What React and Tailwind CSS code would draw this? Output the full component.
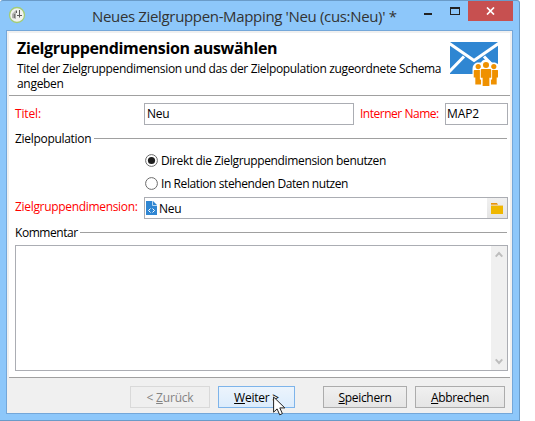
import React from "react";

function AppIcon() {
  return (
    <svg className="mt-[5px] ml-[8px] shrink-0" width="18" height="18" viewBox="0 0 18 18">
      <circle cx="9" cy="9" r="7.5" fill="#f1f2f0" stroke="#a3cc76" strokeWidth="1.3" />
      <path d="M4 8l4-4v9l-4-1z" fill="#b5b5b3" />
      <path d="M6.5 8v4" stroke="#777" strokeWidth="1.4" />
      <path d="M8.5 4.5V7M11.5 4v7.5M9 9.5h5" stroke="#5b5b5b" strokeWidth="1" fill="none" />
    </svg>
  );
}

function Person({ x, y, s }) {
  return (
    <g transform={`translate(${x} ${y}) scale(${s})`}>
      <circle cx="0" cy="2.8" r="2.8" />
      <path d="M-3.8 6.5h7.6q1 0 1 1v7h-1.7v7.5h-6.2v-7.5h-1.7v-7q0-1 1-1z" />
    </g>
  );
}

function MailIcon() {
  return (
    <svg className="mt-[9px] shrink-0" width="48" height="44" viewBox="0 0 48 44">
      <path d="M0 0h48v32H0z" fill="#2f86d2" />
      <path d="M-1 1.2L24 18.5L49 1.2M-1 30l15-15.5M49 30L34 14.5" stroke="#fff" strokeWidth="3" fill="none" />
      <path d="M22.5 33V27q0-5 4.5-6.5h4q1.5-3 5-3t5 3h4l4 2v11z" fill="#fff" />
      <g fill="#ef9100">
        <Person x={28.2} y={22} s={0.93} />
        <Person x={43.8} y={22} s={0.93} />
      </g>
      <path d="M29.9 26h12.2v11.4h-1.9V44h-8.4v-6.6h-1.9z" fill="#fff" />
      <g fill="#ef9100">
        <Person x={36} y={20} s={1.09} />
      </g>
    </svg>
  );
}

function Radio({ checked, children }) {
  return (
    <label className="flex h-[23px] items-center">
      <svg className="shrink-0" width="13" height="13" viewBox="0 0 13 13">
        <circle cx="6.5" cy="6.5" r="5.9" fill="#fff" stroke="#6b6b6b" strokeWidth="1" />
        {checked && <circle cx="6.5" cy="6.5" r="3.6" fill="#1e1e1e" />}
      </svg>
      {children}
    </label>
  );
}

function GroupTitle({ children }) {
  return (
    <div className="flex h-[17px] items-center whitespace-nowrap">
      {children}
      <div className="h-px flex-1 bg-[#a0a0a0]" />
    </div>
  );
}

function Chevron({ down }) {
  return (
    <svg className={down ? "rotate-180" : ""} width="8" height="7" viewBox="0 0 8 7">
      <path d="M.7 5.6L4 2l3.3 3.6" fill="none" stroke="#bdbdbd" strokeWidth="2" />
    </svg>
  );
}

const button = "flex h-[22px] items-center justify-center border whitespace-pre";

export default function App() {
  return (
    <div className="h-[421px] w-[535px] overflow-hidden bg-white font-['Open_Sans','Noto_Sans',sans-serif] text-[12px] leading-[15px] text-black">
      <div className="relative flex h-[421px] w-[520px] flex-col rounded-t-[3px] border-t border-r border-b border-[#6a9bc8] bg-[#8dc7fa]">
        <div className="flex h-[29px] shrink-0 items-start text-[#333]">
          <AppIcon />
          <div className="mt-[5px] ml-[66px] w-[324px] text-[15px] leading-[20px] tracking-[-0.34px] whitespace-nowrap">
            Neues Zielgruppen-Mapping &#39;Neu (cus:Neu)&#39; *
          </div>
          <div className="mt-[12px] ml-[8px] h-[2px] w-[8px] bg-[#222]" />
          <div className="mt-[6px] ml-[18px] h-[8px] w-[10px] border border-t-2 border-[#222]" />
          <div className="ml-[8px] flex h-[20px] w-[45px] items-center justify-center bg-[#c75050]">
            <svg width="9" height="8" viewBox="0 0 9 8">
              <path d="M1 .5l7 7M8 .5l-7 7" stroke="#fff" strokeWidth="1.7" />
            </svg>
          </div>
        </div>

        <div className="ml-[6px] flex h-[384px] w-[507px] flex-col border border-[#74a7d9] bg-[#f0f0f0] px-[2px] pt-[2px]">
          <div className="flex h-[63px] w-[501px] shrink-0 border-b border-[#a0a0a0] bg-white pl-[8px]">
            <div className="w-[433px] shrink-0 whitespace-nowrap">
              <div className="mt-[5px] text-[16px] leading-[20px] font-bold tracking-[-0.34px]">
                <span>Zielgruppendimension auswählen</span>
              </div>
              <div className="mt-[3px]">
                <div className="tracking-[-0.34px]">Titel der Zielgruppendimension und das der Zielpopulation zugeordnete Schema</div>
                <div className="tracking-[-0.3px]">angeben</div>
              </div>
            </div>
            <MailIcon />
          </div>

          <div className="flex h-[281px] w-[501px] shrink-0 flex-col bg-white pt-[7px] pr-[2px] pl-[6px]">
            <div className="flex h-[22px] shrink-0 whitespace-nowrap">
              <div className="mt-[3px] w-[129px] text-[#f00]">
                <span className="tracking-[-0.15px]">Titel:</span>
              </div>
              <div className="w-[210px] border border-[#abadb3] pt-[2px] pl-[2px]">
                <span className="tracking-[-0.3px]">Neu</span>
              </div>
              <div className="mt-[3px] ml-[6px] w-[85px] text-[#f00]">
                <span className="tracking-[-0.48px]">Interner Name:</span>
              </div>
              <div className="w-[63px] border border-[#abadb3] pt-[2px] pl-[1px]">
                <span className="tracking-[-0.1px]">MAP2</span>
              </div>
            </div>
            <div className="mt-[5px] h-[17px] pr-px">
              <GroupTitle>
                <span className="w-[79px] tracking-[-0.3px]">Zielpopulation</span>
              </GroupTitle>
            </div>
            <div className="mt-[2px] ml-[130px]">
              <Radio checked>
                <span className="ml-[3px] tracking-[-0.36px]">Direkt die Zielgruppendimension benutzen</span>
              </Radio>
              <Radio>
                <span className="ml-[3px] tracking-[-0.41px]">In Relation stehenden Daten nutzen</span>
              </Radio>
            </div>
            <div className="mt-[2px] flex h-[22px] shrink-0 whitespace-nowrap">
              <div className="mt-[2px] w-[129px] text-[#f00]">
                <span className="tracking-[-0.32px]">Zielgruppendimension:</span>
              </div>
              <div className="flex w-[364px] border border-[#abadb3]">
                <svg className="mt-[3px] ml-px shrink-0" width="11" height="14" viewBox="0 0 11 14">
                  <path d="M0 0h7l4 4v10H0z" fill="#2f86d2" />
                  <path d="M6.5 0v4.5H11" fill="none" stroke="#b9d9f2" strokeWidth="1" />
                  <path d="M4.5 7.5l-2 2 2 2M6.5 7.5l2 2-2 2" fill="none" stroke="#fff" strokeWidth="1" />
                </svg>
                <div className="mt-[3px] ml-[2px] flex-1">
                  <span className="tracking-[-0.3px]">Neu</span>
                </div>
                <div className="flex w-[20px] items-center justify-center bg-gradient-to-b from-[#f0f0f0] to-[#e5e5e5]">
                  <svg width="12" height="11" viewBox="0 0 12 11">
                    <path d="M0 0h6l1 2H0z" fill="#e8920c" />
                    <path d="M0 1.5h7v1.5H0zM7 2h5v1H7z" fill="#edcf91" />
                    <path d="M0 3h12v8H0z" fill="#efb700" />
                  </svg>
                </div>
              </div>
            </div>
            <div className="mt-[5px] h-[17px] pr-px">
              <GroupTitle>
                <span className="w-[65px] tracking-[-0.45px]">Kommentar</span>
              </GroupTitle>
            </div>
            <div className="mt-[4px] flex h-[126px] shrink-0 justify-end border border-[#abadb3]">
              <div className="flex w-[16px] flex-col items-center justify-between bg-[#f0f0f0] py-[5px]">
                <Chevron />
                <Chevron down />
              </div>
            </div>
          </div>

          <div className="flex h-[34px] w-[501px] border-t border-[#a0a0a0] pt-[8px] pl-[121px]">
            <div className={`${button} w-[80px] border-[#d9d9d9] bg-[#efefef] text-[#838383]`}>
              <span className="tracking-[-0.2px]">&lt; <u>Z</u>urück</span>
            </div>
            <div className={`${button} ml-[8px] w-[77px] border-[#7eb4ea] bg-gradient-to-b from-[#ecf4fc] to-[#dcecfc]`}>
              <span className="tracking-[-0.25px]"><u>W</u>eiter &gt;</span>
            </div>
            <div className={`${button} ml-[28px] w-[84px] border-[#acacac] bg-gradient-to-b from-[#f0f0f0] to-[#e5e5e5]`}>
              <span className="tracking-[-0.32px]"><u>S</u>peichern</span>
            </div>
            <div className={`${button} ml-[8px] w-[90px] border-[#acacac] bg-gradient-to-b from-[#f0f0f0] to-[#e5e5e5]`}>
              <span className="tracking-[-0.35px]"><u>A</u>bbrechen</span>
            </div>
          </div>
        </div>

        <svg className="absolute top-[395px] left-[273px]" width="13" height="20" viewBox="0 0 13 20">
          <path d="M.6 1v15.2l3.5-3.3 2.6 5.9 2.7-1.2-2.6-5.7h5z" fill="#fff" stroke="#222" strokeWidth="1" />
        </svg>
      </div>
    </div>
  );
}
